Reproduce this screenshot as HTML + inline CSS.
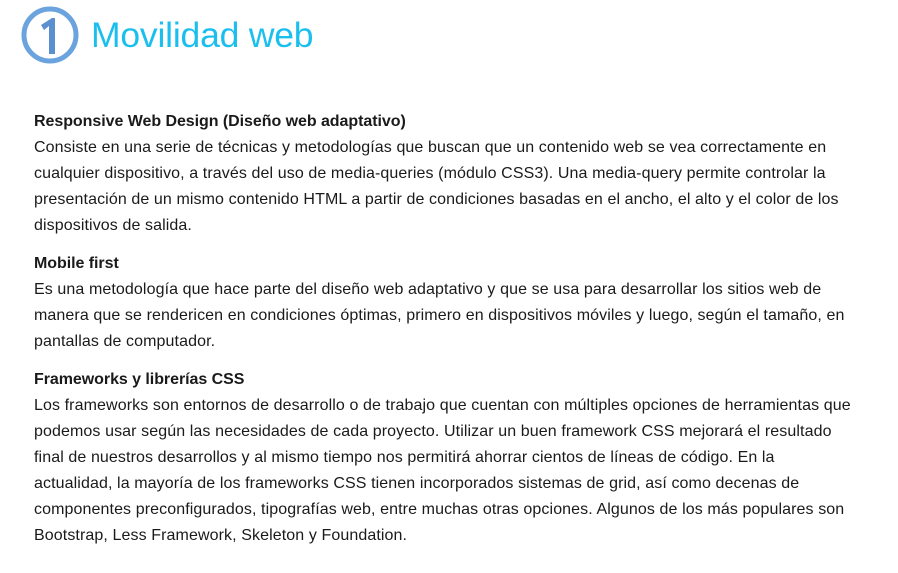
<!DOCTYPE html>
<html><head><meta charset="utf-8"><style>
body{margin:0;background:#fff;width:898px;height:573px;overflow:hidden;font-family:"Liberation Sans",sans-serif;color:#1a1a1a;}
.t{position:absolute;left:91px;top:15px;font-size:35.5px;color:#1bbfee;white-space:nowrap;letter-spacing:-0.2px}
.c{position:absolute;left:20px;top:5px}
.b{position:absolute;left:34px;top:109px;font-size:16px;line-height:26px;white-space:nowrap;letter-spacing:0.1px}
.h{font-weight:bold;letter-spacing:-0.05px;font-size:16px}
.g{height:12px}
</style></head><body>
<svg class="c" width="62" height="62" viewBox="0 0 62 62"><circle cx="30" cy="30" r="26" fill="none" stroke="#6aa3dd" stroke-width="5"/><path d="M21 20 L32 13 L35 13 L35 49 L29 49 L29 21 L24 25 Z" fill="#5a8fd0"/></svg>
<div class="t">Movilidad web</div>
<div class="b">
<div class="h">Responsive Web Design (Diseño web adaptativo)</div>
<div>Consiste en una serie de técnicas y metodologías que buscan que un contenido web se vea correctamente en</div>
<div>cualquier dispositivo, a través del uso de media-queries (módulo CSS3). Una media-query permite controlar la</div>
<div>presentación de un mismo contenido HTML a partir de condiciones basadas en el ancho, el alto y el color de los</div>
<div>dispositivos de salida.</div>
<div class="g"></div>
<div class="h">Mobile first</div>
<div>Es una metodología que hace parte del diseño web adaptativo y que se usa para desarrollar los sitios web de</div>
<div>manera que se rendericen en condiciones óptimas, primero en dispositivos móviles y luego, según el tamaño, en</div>
<div>pantallas de computador.</div>
<div class="g"></div>
<div class="h">Frameworks y librerías CSS</div>
<div>Los frameworks son entornos de desarrollo o de trabajo que cuentan con múltiples opciones de herramientas que</div>
<div>podemos usar según las necesidades de cada proyecto. Utilizar un buen framework CSS mejorará el resultado</div>
<div>final de nuestros desarrollos y al mismo tiempo nos permitirá ahorrar cientos de líneas de código. En la</div>
<div>actualidad, la mayoría de los frameworks CSS tienen incorporados sistemas de grid, así como decenas de</div>
<div>componentes preconfigurados, tipografías web, entre muchas otras opciones. Algunos de los más populares son</div>
<div>Bootstrap, Less Framework, Skeleton y Foundation.</div>
</div>
</body></html>
